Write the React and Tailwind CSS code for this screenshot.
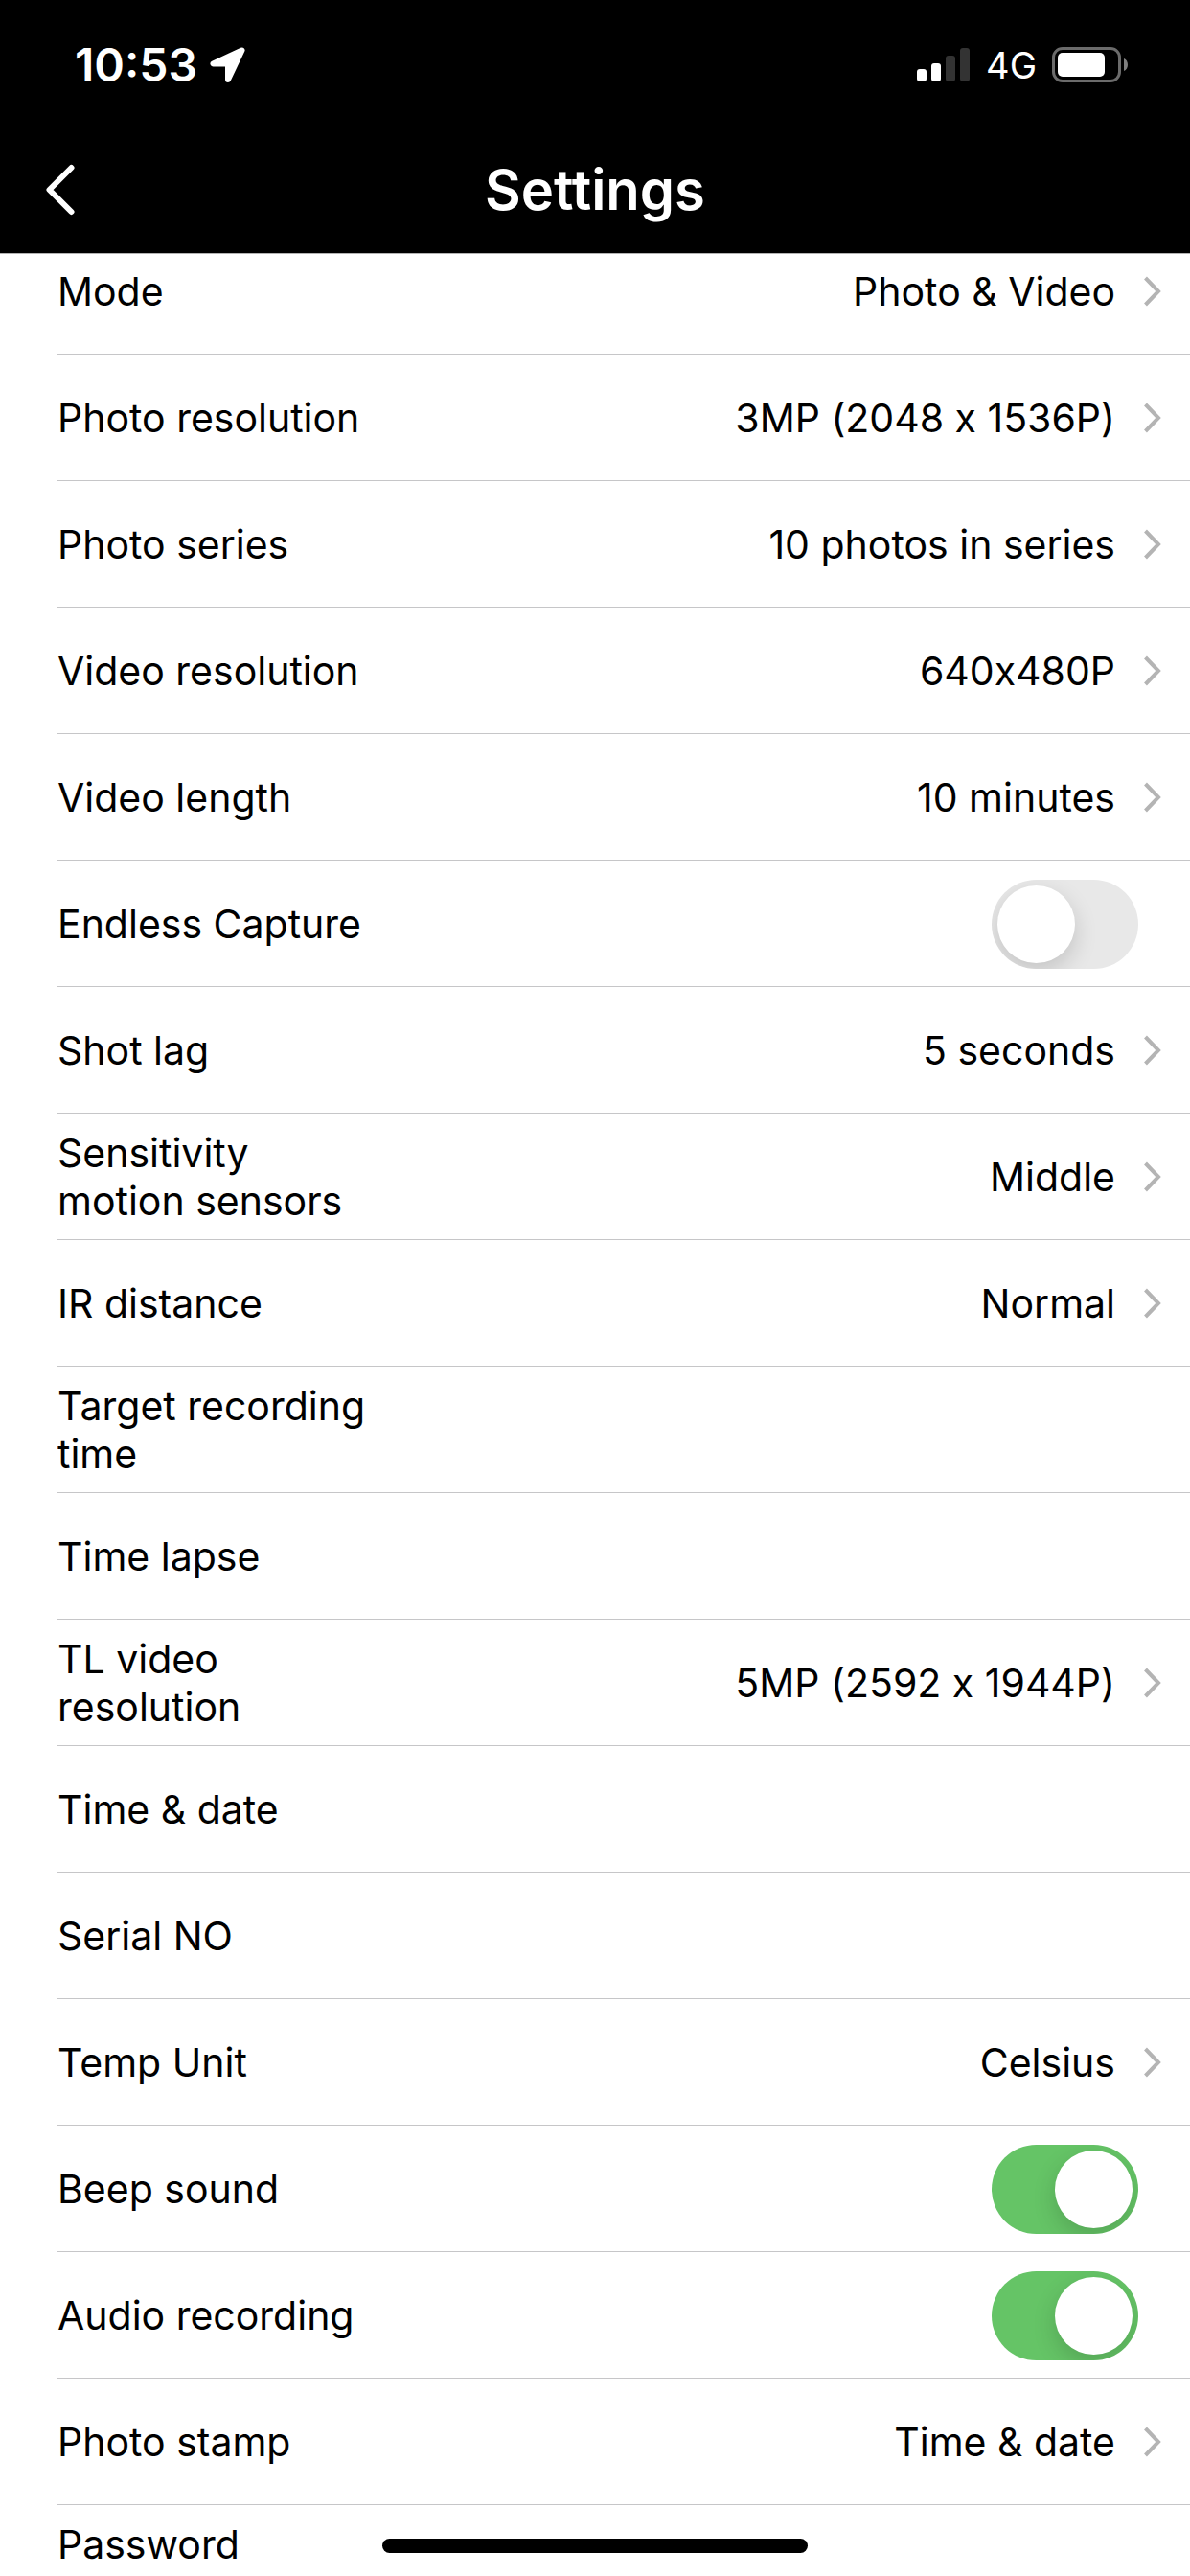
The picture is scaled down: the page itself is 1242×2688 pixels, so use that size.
import React, { useState } from 'react';

const SETTINGS = [
  { label: 'Mode', value: 'Photo & Video' },
  { label: 'Photo resolution', value: '3MP (2048 x 1536P)' },
  { label: 'Photo series', value: '10 photos in series' },
  { label: 'Video resolution', value: '640x480P' },
  { label: 'Video length', value: '10 minutes' },
  { label: 'Endless Capture', toggle: true, on: false },
  { label: 'Shot lag', value: '5 seconds' },
  { label: 'Sensitivity motion sensors', value: 'Middle' },
  { label: 'IR distance', value: 'Normal' },
  { label: 'Target recording time' },
  { label: 'Time lapse' },
  { label: 'TL video resolution', value: '5MP (2592 x 1944P)' },
  { label: 'Time & date' },
  { label: 'Serial NO' },
  { label: 'Temp Unit', value: 'Celsius' },
  { label: 'Beep sound', toggle: true, on: true },
  { label: 'Audio recording', toggle: true, on: true },
  { label: 'Photo stamp', value: 'Time & date' },
];

function StatusBar() {
  return (
    <div className="flex h-[132px] items-center justify-between pt-1 pr-16 pl-[78px]">
      <div className="flex items-center gap-3">
        <span className="text-[48px] font-semibold">10:53</span>
        <svg width="38" height="38" viewBox="0 0 38 38" fill="currentColor" stroke="currentColor" strokeWidth="6" strokeLinejoin="round">
          <path d="M34.5 3.5 L4.5 17.5 L20 17.5 L20 34 Z" />
        </svg>
      </div>

      <div className="flex items-center gap-4">
        <svg width="56" height="36" viewBox="0 0 56 36" fill="currentColor">
          <rect x="0" y="22" width="10" height="13" rx="3" />
          <rect x="15" y="16" width="10" height="19" rx="3" />
          <rect x="30" y="8" width="10" height="27" rx="3" fill="#333333" />
          <rect x="45" y="0" width="10" height="35" rx="3" fill="#333333" />
        </svg>
        <span className="text-[38px]">4G</span>
        <svg width="80" height="38" viewBox="0 0 80 38" fill="none">
          <rect x="1.5" y="1.5" width="69" height="34" rx="9.5" stroke="#6b6b6b" strokeWidth="3" />
          <rect x="6" y="6" width="49" height="25" rx="5" fill="white" />
          <path d="M75 12 C80.300 14 80.300 23 75 25 Z" fill="#808080" />
        </svg>
      </div>
    </div>
  );
}

function NavBar() {
  return (
    <div className="grid h-[132px] grid-cols-[1fr_auto_1fr] items-center px-12">
      <button type="button" aria-label="Back" className="w-8 cursor-pointer">
        <svg width="30" height="54" viewBox="0 0 30 54" fill="none" stroke="currentColor" strokeWidth="6" strokeLinecap="round" strokeLinejoin="round">
          <path d="M26.500 4 L3.500 27 L26.500 50" />
        </svg>
      </button>
      <h1 className="text-[58px] font-semibold">Settings</h1>
    </div>
  );
}

function Toggle({ id, defaultOn }) {
  const [on, setOn] = useState(defaultOn);

  return (
    <input
      id={id}
      type="checkbox"
      role="switch"
      checked={on}
      onChange={(e) => setOn(e.target.checked)}
      className="mr-6 h-[93px] w-[153px] shrink-0 cursor-pointer appearance-none overflow-clip rounded-full bg-[#e8e8e8] p-1.5 transition-colors before:block before:size-[81px] before:rounded-full before:bg-white before:shadow-[0_9px_24px_rgba(0,0,0,0.16)] before:transition-transform before:content-[''] checked:bg-[#65c466] checked:before:translate-x-[60px]"
    />
  );
}

function Chevron() {
  return (
    <svg className="ml-[30px] shrink-0" width="18" height="32" viewBox="0 0 18 32" fill="none" stroke="#b4b4b4" strokeWidth="4">
      <path d="M1.500 2 L15 16 L1.500 30" />
    </svg>
  );
}

const ROW = 'flex min-h-[131px] w-full items-center justify-between pt-4 pr-[30px] pb-[15px] text-left';

function SettingRow({ item }) {
  const id = item.label.toLowerCase().replace(/\W+/g, '-');
  const text = <span className="w-[330px] shrink-0">{item.label}</span>;

  if (item.toggle) {
    return (
      <div className={ROW}>
        <label htmlFor={id} className="w-[330px] shrink-0">{item.label}</label>
        <Toggle id={id} defaultOn={item.on} />
      </div>
    );
  }

  if (item.value) {
    return (
      <button type="button" className={`${ROW} cursor-pointer`}>
        {text}
        <span className="flex items-center">
          {item.value}
          <Chevron />
        </span>
      </button>
    );
  }

  return <div className={ROW}>{text}</div>;
}

export default function App() {
  return (
    <div className="relative flex h-screen flex-col overflow-hidden bg-white font-['Inter',sans-serif] text-black">
      <header className="z-10 shrink-0 border-b border-[#b2b2b2] bg-black text-white">
        <StatusBar />
        <NavBar />
      </header>

      {/* list is scrolled a little way under the header; contextual forms are off so "x" stays a letter between digits */}
      <main className="-mt-[27px] min-h-0 flex-1 overflow-hidden pl-[60px] text-[41px] leading-[50px] [font-variant-ligatures:no-contextual]">
        <ul>
          {SETTINGS.map((item) => (
            <li key={item.label} className="border-b border-[#c6c6c8]">
              <SettingRow item={item} />
            </li>
          ))}
          <li className="py-4">Password</li>
        </ul>
      </main>

      <div className="absolute bottom-6 left-1/2 h-[15px] w-[444px] -translate-x-1/2 rounded-full bg-black" />
    </div>
  );
}
